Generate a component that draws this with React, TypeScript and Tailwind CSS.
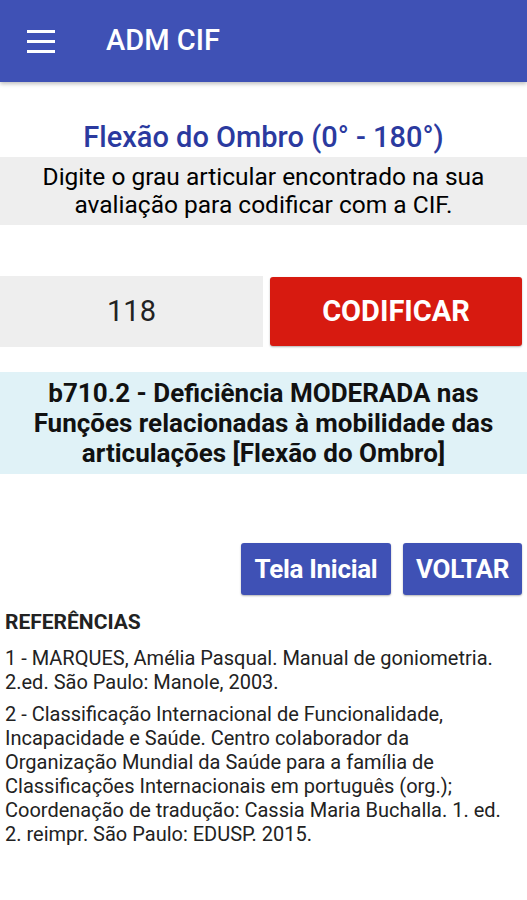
import React from "react";

const App = () => {
  return (
    <div className="min-h-screen w-[527px] bg-white font-['Roboto',sans-serif] text-black">
      {/* Toolbar */}
      <header className="relative z-10 flex h-[82px] items-center bg-[#3F51B5] shadow-[0_2px_4px_rgba(0,0,0,0.25)]">
        <div className="ml-[27px] flex w-[28px] flex-col gap-[7px]">
          <span className="block h-[3px] bg-white" />
          <span className="block h-[3px] bg-white" />
          <span className="block h-[3px] bg-white" />
        </div>
        <h1 className="ml-[51px] text-[29px] font-medium text-white">ADM CIF</h1>
      </header>

      {/* Title */}
      <div className="pt-[36px] text-center text-[29px] font-medium leading-[39px] text-[#2B3A9F]">
        Flexão do Ombro (0° - 180°)
      </div>
      <div className="bg-[#EEEEEE] py-[6px] text-center text-[24.5px] leading-[28px]">
        Digite o grau articular encontrado na sua
        <br />
        avaliação para codificar com a CIF.
      </div>

      {/* Input row */}
      <div className="mt-[51px] flex items-center gap-[7px]">
        <div className="flex h-[71px] w-[263px] items-center justify-center bg-[#EEEEEE] text-[29px] text-[#222]">
          118
        </div>
        <button className="flex h-[69px] w-[252px] items-center justify-center rounded-[3px] bg-[#D71A10] text-[29px] font-bold text-white shadow-[0_1px_2px_rgba(0,0,0,0.3)]">
          CODIFICAR
        </button>
      </div>

      {/* Result */}
      <div className="mt-[25px] bg-[#E0F2F7] py-[6px] text-center text-[26px] font-bold leading-[30px] text-[#111]">
        b710.2 - Deficiência MODERADA nas
        <br />
        Funções relacionadas à mobilidade das
        <br />
        articulações [Flexão do Ombro]
      </div>

      {/* Actions */}
      <div className="mt-[69px] flex justify-end gap-[12px] pr-[5px]">
        <button className="flex h-[52px] w-[150px] items-center justify-center rounded-[3px] bg-[#3F51B5] text-[26px] font-bold tracking-[-0.3px] text-white shadow-[0_1px_2px_rgba(0,0,0,0.3)]">
          Tela Inicial
        </button>
        <button className="flex h-[52px] w-[119px] items-center justify-center rounded-[3px] bg-[#3F51B5] text-[26px] font-bold tracking-[-0.3px] text-white shadow-[0_1px_2px_rgba(0,0,0,0.3)]">
          VOLTAR
        </button>
      </div>

      {/* References */}
      <div className="px-[5px] pt-[15px] text-[#222]">
        <div className="text-[21px] font-bold leading-[24px]">REFERÊNCIAS</div>
        <p className="mt-[12px] text-[20px] leading-[24px]">
          1 - MARQUES, Amélia Pasqual. Manual de goniometria.
          <br />
          2.ed. São Paulo: Manole, 2003.
        </p>
        <p className="mt-[8px] text-[20px] leading-[24px]">
          2 - Classificação Internacional de Funcionalidade,
          <br />
          Incapacidade e Saúde. Centro colaborador da
          <br />
          Organização Mundial da Saúde para a família de
          <br />
          Classificações Internacionais em português (org.);
          <br />
          Coordenação de tradução: Cassia Maria Buchalla. 1. ed.
          <br />
          2. reimpr. São Paulo: EDUSP. 2015.
        </p>
      </div>
    </div>
  );
};

export default App;
